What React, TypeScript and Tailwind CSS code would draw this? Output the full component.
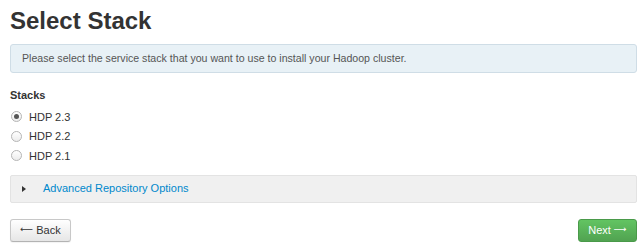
import React from "react";

function Radio({ checked }: { checked?: boolean }) {
  return (
    <span className="inline-flex items-center justify-center w-[11px] h-[11px] rounded-full border border-[#b5b5b5] bg-gradient-to-b from-[#ffffff] to-[#ececec]">
      {checked && <span className="w-[5px] h-[5px] rounded-full bg-[#555]" />}
    </span>
  );
}

const arrowFont = { fontFamily: '"DejaVu Sans", sans-serif' };

export default function App() {
  const stacks = [
    { name: "HDP 2.3", checked: true },
    { name: "HDP 2.2" },
    { name: "HDP 2.1" },
  ];
  return (
    <div className="w-[644px] h-[250px] bg-white pl-[10px] pr-[7px] text-[#333]" style={{ fontFamily: '"Liberation Sans", Arial, sans-serif' }}>
      <h1 className="pt-[7px] text-[24px] leading-[28px] font-bold text-[#333]">Select Stack</h1>
      <div className="mt-[9px] h-[29px] flex items-center pl-[11px] rounded-[3px] border border-[#cfdde6] bg-[#e8f1f6] text-[10.6px] text-[#555]">
        Please select the service stack that you want to use to install your Hadoop cluster.
      </div>
      <div className="mt-[15px] text-[11px] font-bold leading-[14px]">Stacks</div>
      <div className="mt-[5px] flex flex-col">
        {stacks.map((s) => (
          <label key={s.name} className="h-[19.5px] flex items-center gap-[7px] pl-[1px] text-[11px]">
            <Radio checked={s.checked} />
            <span>{s.name}</span>
          </label>
        ))}
      </div>
      <div className="mt-[9px] h-[28px] flex items-center border border-[#e3e3e3] bg-[#f0f0f0] rounded-[2px]">
        <span className="ml-[11px] w-0 h-0 border-y-[3.5px] border-y-transparent border-l-[4px] border-l-[#333]" />
        <span className="ml-[17px] text-[11px] text-[#0088cc]">Advanced Repository Options</span>
      </div>
      <div className="mt-[16px] flex justify-between">
        <button className="h-[23px] w-[61px] flex items-center justify-center gap-[3px] rounded-[3px] border border-[#c8c8c8] border-b-[#b3b3b3] bg-gradient-to-b from-[#ffffff] to-[#e6e6e6] text-[11px] text-[#333] shadow-[0_1px_1px_rgba(0,0,0,0.05)]">
          <span className="text-[9px]" style={arrowFont}>⟵</span>
          <span>Back</span>
        </button>
        <button className="h-[23px] w-[59px] flex items-center justify-center gap-[3px] rounded-[3px] border border-[#4a9a4a] bg-gradient-to-b from-[#62c462] to-[#51a351] text-[11px] text-white">
          <span>Next</span>
          <span className="text-[9px]" style={arrowFont}>⟶</span>
        </button>
      </div>
    </div>
  );
}
